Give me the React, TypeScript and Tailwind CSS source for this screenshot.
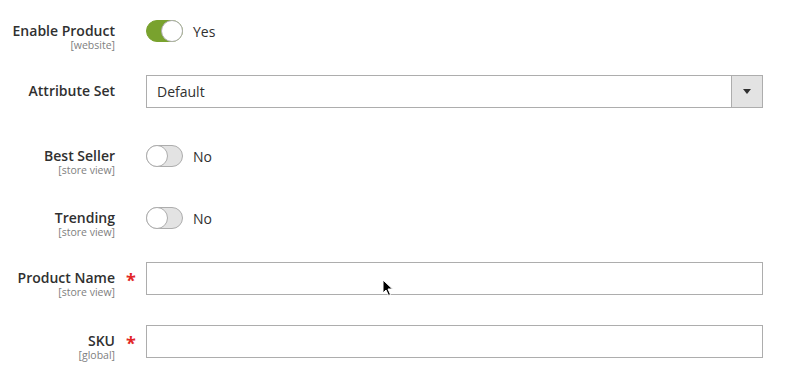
import React from "react";

type ToggleProps = { on: boolean };

function Toggle({ on }: ToggleProps) {
  return (
    <div className="flex items-center gap-[10px]">
      <div
        className={`relative h-[22px] w-[37px] rounded-full border ${
          on ? "border-[#79a22e] bg-[#79a22e]" : "border-[#adadad] bg-[#e3e3e3]"
        }`}
      >
        <div
          className={`absolute top-[-1px] h-[22px] w-[22px] rounded-full border border-[#adadad] bg-white ${
            on ? "right-[-1px]" : "left-[-1px]"
          }`}
        />
      </div>
      <span className="text-[14px] text-[#303030]">{on ? "Yes" : "No"}</span>
    </div>
  );
}

type FieldProps = {
  label: string;
  scope?: string;
  required?: boolean;
  tall?: boolean;
  className?: string;
  children: React.ReactNode;
};

function Field({ label, scope, required, tall, className, children }: FieldProps) {
  return (
    <div className={`flex shrink-0 items-start ${className ?? ""}`}>
      <div
        className={`w-[115px] shrink-0 text-right ${tall ? "pt-[8px]" : "pt-[3px]"}`}
      >
        <div className="text-[14px] font-semibold leading-[16px] text-[#303030]">
          {label}
        </div>
        {scope && (
          <div className="text-[10.5px] leading-[13px] text-[#808080]">{scope}</div>
        )}
      </div>
      <div
        className={`w-[31px] shrink-0 pl-[11px] text-[18px] font-bold leading-none text-[#e22626] ${
          tall ? "pt-[9px]" : "pt-[4px]"
        }`}
      >
        {required ? "*" : ""}
      </div>
      <div className="flex-1">{children}</div>
    </div>
  );
}

export default function App() {
  return (
    <div
      className="relative h-[373px] w-[790px] overflow-hidden bg-white"
      style={{ fontFamily: '"Open Sans", sans-serif' }}
    >
      <div className="flex w-[763px] flex-col pt-[20px]">
        <Field label="Enable Product" scope="[website]" className="h-[55px]">
          <Toggle on />
        </Field>

        <Field label="Attribute Set" tall className="h-[70px]">
          <div className="flex h-[33px] border border-[#adadad]">
            <div className="flex flex-1 items-center px-[10px] text-[14px] text-[#303030]">
              Default
            </div>
            <div className="flex w-[31px] items-center justify-center border-l border-[#adadad] bg-[#e3e3e3]">
              <svg width="8" height="5" viewBox="0 0 8 5">
                <path d="M0 0h8L4 5z" fill="#303030" />
              </svg>
            </div>
          </div>
        </Field>

        <Field label="Best Seller" scope="[store view]" className="h-[62px]">
          <Toggle on={false} />
        </Field>

        <Field label="Trending" scope="[store view]" className="h-[55px]">
          <Toggle on={false} />
        </Field>

        <Field label="Product Name" scope="[store view]" required tall className="h-[63px]">
          <div className="h-[33px] border border-[#adadad] bg-white" />
        </Field>

        <Field label="SKU" scope="[global]" required tall>
          <div className="h-[33px] border border-[#adadad] bg-white" />
        </Field>
      </div>

      <svg
        className="absolute left-[382px] top-[279px]"
        width="12"
        height="18"
        viewBox="0 0 12 18"
      >
        <path
          d="M1 1v13l3-3 2.5 5.5 2-1L6 10h4.5z"
          fill="#000"
          stroke="#fff"
          strokeWidth="1"
        />
      </svg>
    </div>
  );
}
